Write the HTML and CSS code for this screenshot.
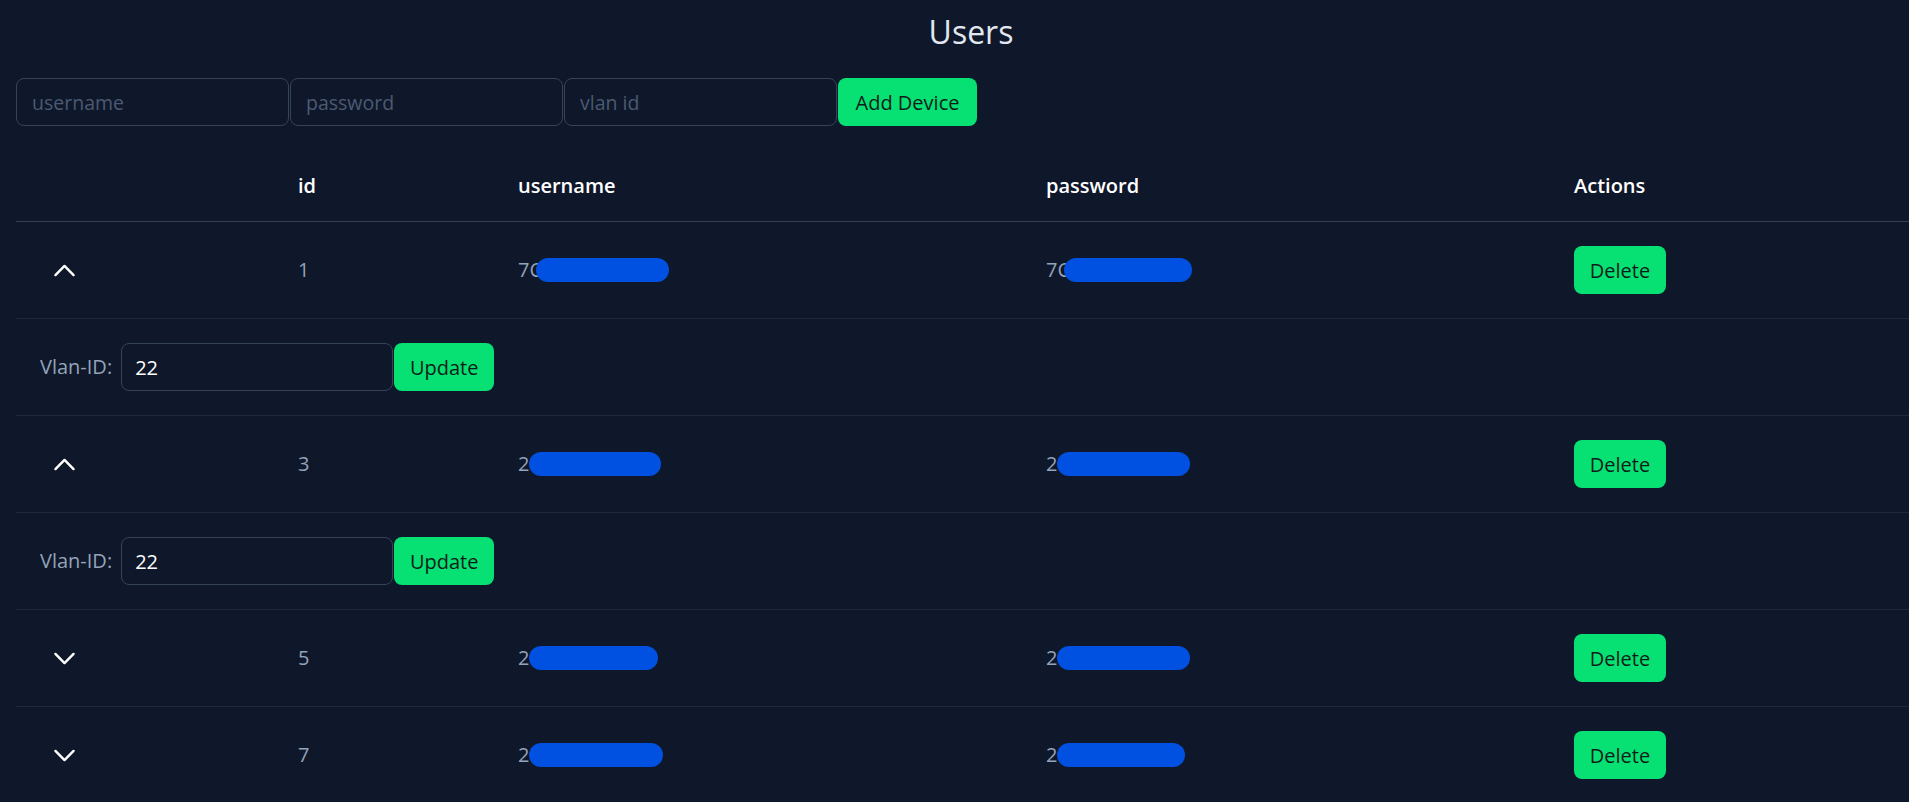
FILE: index.html
```html
<!DOCTYPE html>
<html lang="en">
<head>
<meta charset="utf-8">
<title>Users</title>
<link rel="stylesheet" href="styles.css">
</head>
<body>
<main class="page">
  <h1 class="title">Users</h1>
  <form class="add-form">
    <input class="field" type="text" placeholder="username">
    <input class="field" type="password" placeholder="password">
    <input class="field" type="text" placeholder="vlan id">
    <button type="button" class="btn btn-add">Add Device</button>
  </form>
  <table class="users">
    <colgroup>
      <col class="c-toggle"><col class="c-id"><col class="c-user"><col class="c-pass"><col class="c-act">
    </colgroup>
    <thead>
      <tr><th></th><th>id</th><th>username</th><th>password</th><th>Actions</th></tr>
    </thead>
    <tbody>
      <tr class="row">
        <td><button class="toggle" type="button"><svg viewBox="0 0 24 24" class="chev"><path d="M4.5 15.75l7.5-7.5 7.5 7.5"/></svg></button></td>
        <td>1</td>
        <td>7C<span class="redact redact-c" style="width:133px"></span></td>
        <td>7C<span class="redact redact-c" style="width:128px"></span></td>
        <td><button class="btn btn-del" type="button">Delete</button></td>
      </tr>
      <tr class="row detail">
        <td colspan="5"><div class="vlan"><label class="vlan-label">Vlan-ID:</label><input class="field vlan-field" type="text" value="22"><button class="btn btn-upd" type="button">Update</button></div></td>
      </tr>
      <tr class="row">
        <td><button class="toggle" type="button"><svg viewBox="0 0 24 24" class="chev"><path d="M4.5 15.75l7.5-7.5 7.5 7.5"/></svg></button></td>
        <td>3</td>
        <td>2<span class="redact" style="width:132px"></span></td>
        <td>2<span class="redact" style="width:133px"></span></td>
        <td><button class="btn btn-del" type="button">Delete</button></td>
      </tr>
      <tr class="row detail">
        <td colspan="5"><div class="vlan"><label class="vlan-label">Vlan-ID:</label><input class="field vlan-field" type="text" value="22"><button class="btn btn-upd" type="button">Update</button></div></td>
      </tr>
      <tr class="row">
        <td><button class="toggle" type="button"><svg viewBox="0 0 24 24" class="chev"><path d="M19.5 8.25l-7.5 7.5-7.5-7.5"/></svg></button></td>
        <td>5</td>
        <td>2<span class="redact" style="width:129px"></span></td>
        <td>2<span class="redact" style="width:133px"></span></td>
        <td><button class="btn btn-del" type="button">Delete</button></td>
      </tr>
      <tr class="row">
        <td><button class="toggle" type="button"><svg viewBox="0 0 24 24" class="chev"><path d="M19.5 8.25l-7.5 7.5-7.5-7.5"/></svg></button></td>
        <td>7</td>
        <td>2<span class="redact" style="width:134px"></span></td>
        <td>2<span class="redact" style="width:128px"></span></td>
        <td><button class="btn btn-del" type="button">Delete</button></td>
      </tr>
    </tbody>
  </table>
</main>
</body>
</html>
```
FILE: styles.css
```css
html, body {
  margin: 0;
  padding: 0;
  overflow: hidden;
  background: #0f172a;
}
body {
  font-family: "Open Sans", "Noto Sans", "Liberation Sans", sans-serif;
  font-size: 20px;
  color: #e2e8f0;
}
.page {
  width: 1910px;
  margin-left: 16px;
  padding-top: 12px;
}
.title {
  margin: 0 0 26px 0;
  font-size: 32px;
  line-height: 40px;
  font-weight: 400;
  text-align: center;
  color: #e2e8f0;
}
.add-form {
  display: flex;
  gap: 1px;
  margin: 0;
}
.field {
  box-sizing: border-box;
  width: 273px;
  height: 48px;
  padding: 0 15px;
  border: 1px solid #364459;
  border-radius: 8px;
  background: #0f172a;
  color: #ffffff;
  font-family: inherit;
  font-size: 19.5px;
  outline: none;
}
.field::placeholder {
  color: #4b5a72;
}
.btn {
  box-sizing: border-box;
  height: 48px;
  border: none;
  border-radius: 8px;
  background: #07e072;
  color: #0f1d1a;
  font-family: inherit;
  font-size: 20px;
  font-weight: 500;
  padding: 0 16px;
  cursor: pointer;
}
.btn-add { width: 139px; padding: 0; }
.btn-del { width: 92px; padding: 0; }
.btn-upd { width: 100px; padding: 0; }

.users {
  width: 1910px;
  table-layout: fixed;
  border-collapse: collapse;
  margin-top: 19px;
}
.c-toggle { width: 258px; }
.c-id { width: 220px; }
.c-user { width: 528px; }
.c-pass { width: 528px; }
.c-act { width: 376px; }

.users th {
  text-align: left;
  font-weight: 600;
  color: #ffffff;
  padding: 27px 24px 21px 24px;
  line-height: 28px;
  border-bottom: 1px solid #334155;
}
.users td {
  padding: 24px 24px;
  line-height: 28px;
  color: #94a3b8;
  vertical-align: middle;
  white-space: nowrap;
}
.row {
  border-bottom: 1px solid #1e293b;
}
.toggle {
  display: block;
  background: transparent;
  border: none;
  padding: 0 0 0 10px;
  margin: 0;
  cursor: pointer;
}
.chev {
  display: block;
  width: 29px;
  height: 29px;
  fill: none;
  stroke: #ffffff;
  stroke-width: 2;
  stroke-linecap: round;
  stroke-linejoin: round;
}
.redact {
  display: inline-block;
  height: 24px;
  border-radius: 12px;
  background: #0050e1;
  vertical-align: middle;
  margin-top: -4px;
}
.redact-c {
  margin-left: -6px;
}
.vlan {
  display: flex;
  align-items: center;
}
.vlan-label {
  color: #94a3b8;
  margin-right: 9px;
}
.vlan-field {
  width: 272px;
  font-size: 20px;
  padding: 0 13px;
  margin-right: 1px;
}
```
